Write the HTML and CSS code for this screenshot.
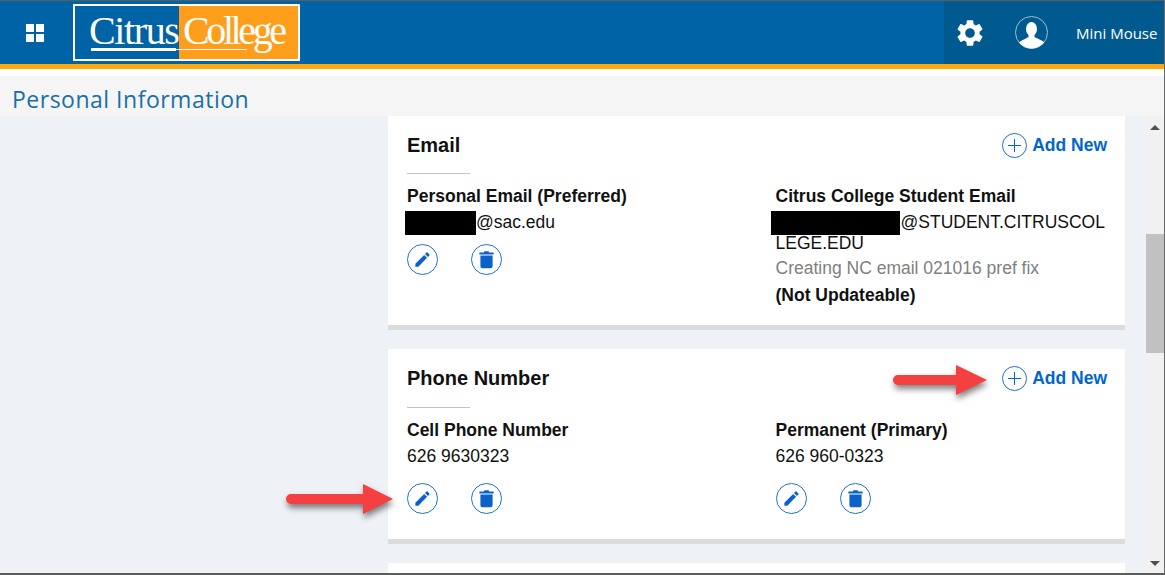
FILE: index.html
```html
<!DOCTYPE html>
<html lang="en">
<head>
    <meta charset="UTF-8">
    <meta name="viewport" content="width=device-width, initial-scale=1.0">
    <title>Personal Information</title>
    <link rel="stylesheet" href="styles.css">
</head>
<body>
    <svg class="icon-defs" aria-hidden="true">
        <symbol id="icon-pencil" viewBox="0 0 24 24">
            <path d="M3 17.25V21h3.75L17.81 9.94l-3.75-3.75L3 17.25zM20.71 7.04a1 1 0 0 0 0-1.41l-2.34-2.34a1 1 0 0 0-1.41 0l-1.83 1.83 3.75 3.75 1.83-1.83z"/>
        </symbol>
        <symbol id="icon-trash" viewBox="0 0 24 24">
            <path d="M9.5 1.5h5l1 1.5H21v2.6H3V3h5.500zM4.300 7h15.400v13.500A2.500 2.500 0 0 1 17.200 23H6.800a2.500 2.500 0 0 1-2.500-2.500z"/>
        </symbol>
    </svg>

    <div class="window">
        <!-- top bar -->
        <header class="topbar">
            <div class="apps-grid"><span></span><span></span><span></span><span></span></div>
            <div class="logo">
                <span class="logo-citrus">Citrus</span><span class="logo-college">College</span>
            </div>
            <div class="user-area">
                <svg class="gear" viewBox="0 0 24 24"><path d="M19.140 12.940c.04-.3.06-.61.06-.94 0-.32-.02-.64-.07-.94l2.030-1.580a.49.49 0 0 0 .12-.61l-1.920-3.320a.488.488 0 0 0-.59-.22l-2.390.96c-.5-.38-1.030-.7-1.620-.94l-.36-2.540a.484.484 0 0 0-.48-.41h-3.840c-.24 0-.43.17-.47.41l-.36 2.540c-.59.24-1.130.57-1.620.94l-2.390-.96c-.22-.08-.47 0-.59.22L2.740 8.870c-.12.21-.08.47.12.61l2.030 1.580c-.05.3-.09.63-.09.94s.02.64.07.94l-2.030 1.580a.49.49 0 0 0-.12.61l1.920 3.320c.12.22.37.29.59.22l2.390-.96c.5.38 1.030.7 1.620.94l.36 2.540c.05.24.24.41.48.41h3.840c.24 0 .44-.17.47-.41l.36-2.540c.59-.24 1.130-.56 1.620-.94l2.390.96c.22.08.47 0 .59-.22l1.920-3.320c.12-.22.07-.47-.12-.61l-2.010-1.580zM12 15.600c-1.980 0-3.600-1.620-3.600-3.600s1.620-3.600 3.600-3.600 3.600 1.620 3.600 3.600-1.620 3.600-3.600 3.600z"/></svg>
                <svg class="avatar" viewBox="0 0 33 33">
                    <defs><clipPath id="avatarClip"><circle cx="16.500" cy="16.500" r="16"/></clipPath></defs>
                    <circle cx="16.500" cy="16.500" r="16" fill="none" stroke="#9fc0d6" stroke-width="1"/>
                    <g clip-path="url(#avatarClip)">
                        <ellipse cx="16.500" cy="13" rx="5.500" ry="7"/>
                        <path d="M13.500 18h6v3l8 4c2 1 3 3 3 8H3c0-5 1-7 3-8l7.500-4z"/>
                    </g>
                </svg>
                <span class="user-name">Mini Mouse</span>
            </div>
        </header>

        <div class="page-title"><h1>Personal Information</h1></div>

        <div class="main">
            <div class="content">
                <!-- Email -->
                <section class="card card-email">
                    <div class="card-head">
                        <h2>Email</h2>
                        <a class="add-new" href="#"><span class="add-circle"></span>Add New</a>
                    </div>
                    <div class="card-rule"></div>
                    <div class="card-cols">
                        <div class="entry">
                            <div class="entry-label">Personal Email (Preferred)</div>
                            <div class="entry-value"><span class="redact redact-short"></span>@sac.edu</div>
                            <div class="entry-actions">
                                <a class="round-btn" href="#"><svg class="pencil"><use href="#icon-pencil"/></svg></a>
                                <a class="round-btn" href="#"><svg class="trash"><use href="#icon-trash"/></svg></a>
                            </div>
                        </div>
                        <div class="entry">
                            <div class="entry-label">Citrus College Student Email</div>
                            <div class="entry-value entry-break"><span class="redact redact-long"></span>@STUDENT.CITRUSCOLLEGE.EDU</div>
                            <div class="entry-note">Creating NC email 021016 pref fix</div>
                            <div class="entry-lock">(Not Updateable)</div>
                        </div>
                    </div>
                </section>

                <!-- Phone -->
                <section class="card card-phone">
                    <div class="card-head">
                        <h2>Phone Number</h2>
                        <a class="add-new" href="#"><span class="add-circle"></span>Add New</a>
                    </div>
                    <div class="card-rule"></div>
                    <div class="card-cols">
                        <div class="entry">
                            <div class="entry-label">Cell Phone Number</div>
                            <div class="entry-value">626 9630323</div>
                            <div class="entry-actions">
                                <a class="round-btn" href="#"><svg class="pencil"><use href="#icon-pencil"/></svg></a>
                                <a class="round-btn" href="#"><svg class="trash"><use href="#icon-trash"/></svg></a>
                            </div>
                        </div>
                        <div class="entry">
                            <div class="entry-label">Permanent (Primary)</div>
                            <div class="entry-value">626 960-0323</div>
                            <div class="entry-actions">
                                <a class="round-btn" href="#"><svg class="pencil"><use href="#icon-pencil"/></svg></a>
                                <a class="round-btn" href="#"><svg class="trash"><use href="#icon-trash"/></svg></a>
                            </div>
                        </div>
                    </div>
                </section>

                <section class="card card-next"></section>
            </div>

            <div class="scrollbar">
                <span class="scroll-up"></span>
                <span class="scroll-thumb"></span>
                <span class="scroll-down"></span>
            </div>
        </div>

        <!-- screenshot callouts -->
        <svg class="callout callout-add" viewBox="0 0 94 30"><path d="M5 10h58V0l31 15-31 15V20H5a5 5 0 0 1 0-10z"/></svg>
        <svg class="callout callout-edit" viewBox="0 0 107 30"><path d="M5 10h72V0l30 15-30 15V20H5a5 5 0 0 1 0-10z"/></svg>
    </div>
</body>
</html>
```

FILE: styles.css
```css
* {
    box-sizing: border-box;
}

html,
body {
    margin: 0;
    height: 100%;
    overflow: hidden;
}

body {
    font-family: "Liberation Sans", Arial, sans-serif;
    color: #111;
    background: #eef2f7;
}

.icon-defs {
    display: none;
}

.window {
    position: relative;
    display: flex;
    flex-direction: column;
    height: 575px;
    background: #fff;
    border-top: 1px solid #5c5c5c;
    border-right: 1px solid #6a6a6a;
    border-bottom: 2px solid #5c5c5c;
    overflow: hidden;
}

/* top bar */
.topbar {
    display: flex;
    align-items: center;
    flex: none;
    height: 68px;
    margin-bottom: 7px;
    background: #0063a6;
    border-bottom: 5px solid #ffa90f;
}

.apps-grid {
    display: grid;
    grid-template-columns: 8px 8px;
    grid-auto-rows: 8px;
    gap: 2px;
    margin-left: 26px;
}

.apps-grid span {
    background: #fff;
}

.logo {
    position: relative;
    display: flex;
    align-self: flex-start;
    width: 227px;
    height: 57px;
    margin-top: 3px;
    margin-left: 29px;
    border: 2px solid #fff;
    background: linear-gradient(90deg, #0063a6 0 104px, #ff9e1b 104px);
    font-family: "Liberation Serif", "Times New Roman", serif;
    font-size: 40px;
    line-height: 50px;
    color: #fff;
}

/* thin and thick underline of the wordmark */
.logo::after {
    content: "";
    position: absolute;
    left: 16px;
    top: 43px;
    width: 156px;
    height: 1px;
    background: #fff;
}

.logo::before {
    content: "";
    position: absolute;
    left: 16px;
    top: 42px;
    width: 85px;
    height: 3px;
    background: #fff;
}

.logo-citrus {
    width: 94px;
    margin-left: 14px;
    letter-spacing: -1.400px;
}

.logo-college {
    letter-spacing: -3.400px;
}

.user-area {
    display: flex;
    align-items: center;
    align-self: stretch;
    width: 220px;
    margin-left: auto;
    padding-left: 10px;
    background: #005a8f;
    color: #fff;
}

.gear {
    width: 32px;
    height: 32px;
    fill: #fff;
}

.avatar {
    width: 33px;
    height: 33px;
    margin-left: 29px;
    fill: #fff;
}

.user-name {
    margin-left: 28px;
    font-family: "Open Sans", sans-serif;
    font-size: 15px;
    white-space: nowrap;
}

/* page title */
.page-title {
    flex: none;
    height: 40px;
    padding-left: 12px;
    background: #f5f5f5;
}

.page-title h1 {
    margin: 0;
    font-family: "Open Sans", sans-serif;
    font-size: 23px;
    font-weight: 400;
    line-height: 46px;
    letter-spacing: 0.500px;
    color: #1a6fa8;
}

/* main area */
.main {
    display: flex;
    flex: 1;
    min-height: 0;
    background: #eef2f7;
}

.content {
    flex: none;
    width: 737px;
    margin-left: 388px;
    margin-right: 21px;
}

.card {
    padding: 0 18px 0 19px;
    margin-bottom: 19px;
    background: #fff;
    border-bottom: 5px solid #dcdcdc;
}

.card-email {
    height: 214px;
}

.card-phone {
    height: 195px;
}

.card-next {
    height: 120px;
}

.card-head {
    display: flex;
    align-items: center;
    justify-content: space-between;
    padding-top: 14px;
}

.card-head h2 {
    margin: 0;
    font-size: 20px;
    line-height: 30px;
    font-weight: 700;
}

.add-new {
    display: flex;
    align-items: center;
    font-size: 17.500px;
    font-weight: 700;
    line-height: 26px;
    color: #0066cc;
    text-decoration: none;
}

.add-circle {
    position: relative;
    width: 25px;
    height: 25px;
    margin-right: 5px;
    border: 1px solid #1f6fd0;
    border-radius: 50%;
}

.add-circle::before,
.add-circle::after {
    content: "";
    position: absolute;
    background: #0066cc;
}

.add-circle::before {
    left: 5px;
    right: 5px;
    top: 11px;
    height: 1px;
}

.add-circle::after {
    top: 5px;
    bottom: 5px;
    left: 11px;
    width: 1px;
}

.card-rule {
    width: 63px;
    height: 1px;
    margin-top: 13px;
    background: #c4c4c4;
}

.card-phone .card-rule {
    margin-top: 14px;
}

.card-cols {
    display: grid;
    grid-template-columns: 368.500px 1fr;
    margin-top: 9px;
}

.entry-label {
    font-size: 17.500px;
    font-weight: 700;
    line-height: 26px;
}

.entry-value {
    font-size: 17.500px;
    line-height: 21px;
    margin-top: 3px;
}

.entry-break {
    word-break: break-all;
}

.redact {
    display: inline-block;
    height: 24px;
    margin: -4px 0 -3px;
    vertical-align: middle;
    background: #000;
}

.redact-short {
    width: 71px;
    margin-left: -2px;
}

.redact-long {
    width: 129px;
    margin-left: -5px;
    margin-right: 1px;
}

.entry-note {
    margin-top: 4px;
    font-size: 17.500px;
    line-height: 21px;
    color: #808080;
}

.entry-lock {
    margin-top: 6px;
    font-size: 17.500px;
    font-weight: 700;
    line-height: 21px;
}

.entry-actions {
    display: flex;
    gap: 33px;
    margin-top: 11px;
}

.card-phone .entry-actions {
    margin-top: 16px;
}

.round-btn {
    display: flex;
    align-items: center;
    justify-content: center;
    width: 31px;
    height: 31px;
    border: 1.500px solid #1f72cf;
    border-radius: 50%;
}

.pencil {
    width: 19px;
    height: 19px;
    fill: #0a62c8;
}

.trash {
    width: 19px;
    height: 19px;
    fill: #0a62c8;
}

/* scrollbar */
.scrollbar {
    display: flex;
    flex-direction: column;
    align-items: center;
    flex: none;
    width: 18px;
    background: #f1f1f1;
}

.scroll-up,
.scroll-down {
    width: 0;
    height: 0;
    border-left: 5px solid transparent;
    border-right: 5px solid transparent;
}

.scroll-up {
    margin-top: 9px;
    border-bottom: 5px solid #505050;
}

.scroll-thumb {
    width: 100%;
    height: 119px;
    margin-top: 104px;
    background: #c1c1c1;
}

.scroll-down {
    margin-top: auto;
    margin-bottom: 7px;
    border-top: 5px solid #505050;
}

/* red arrows drawn on the screenshot */
.callout {
    position: absolute;
    height: 30px;
    overflow: visible;
    fill: #f44040;
    filter: drop-shadow(1px 4px 3px rgba(0, 0, 0, 0.5));
}

.callout-add {
    left: 893px;
    top: 364px;
    width: 94px;
}

.callout-edit {
    left: 286px;
    top: 483px;
    width: 107px;
}
```
